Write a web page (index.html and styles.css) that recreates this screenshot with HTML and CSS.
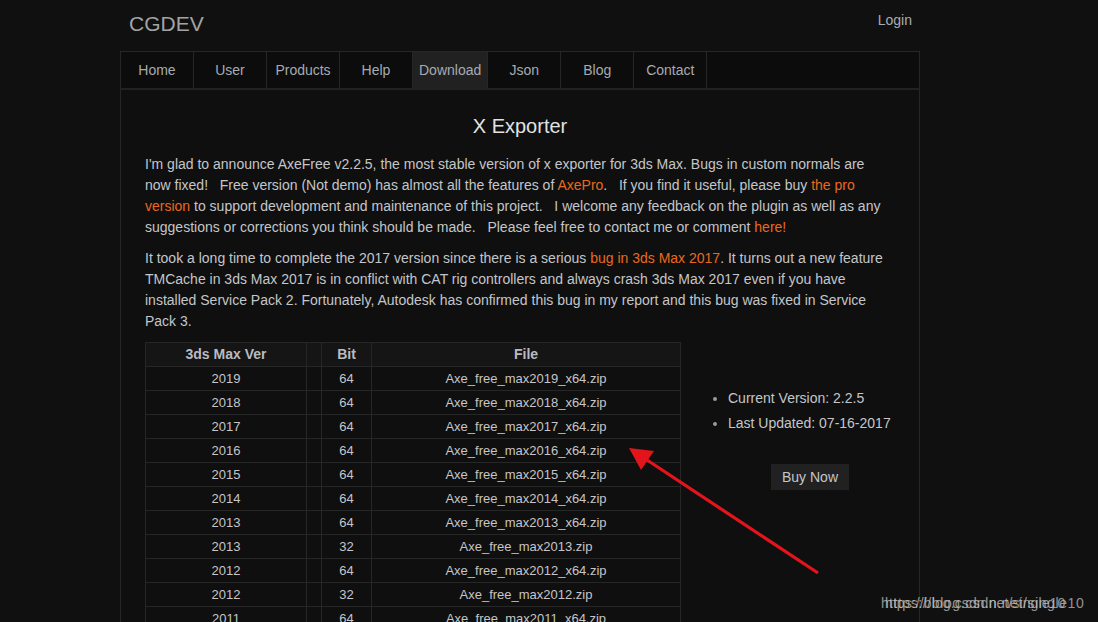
FILE: index.html
```html
<!DOCTYPE html>
<html>
<head>
<meta charset="utf-8">
<title>CGDEV - X Exporter</title>
<link rel="stylesheet" href="styles.css">
</head>
<body>
<div class="page">
  <header class="top">
    <span class="brand">CGDEV</span>
    <a class="login" href="#">Login</a>
  </header>
  <nav class="nav">
    <a class="nav-item" href="#">Home</a>
    <a class="nav-item" href="#">User</a>
    <a class="nav-item" href="#">Products</a>
    <a class="nav-item" href="#">Help</a>
    <a class="nav-item active" href="#">Download</a>
    <a class="nav-item" href="#">Json</a>
    <a class="nav-item" href="#">Blog</a>
    <a class="nav-item" href="#">Contact</a>
  </nav>
  <main class="panel">
    <h1 class="title">X Exporter</h1>
    <p class="text">I'm glad to announce AxeFree v2.2.5, the most stable version of x exporter for 3ds Max. Bugs in custom normals are now fixed! &nbsp; Free version (Not demo) has almost all the features of <a class="link" href="#">AxePro</a>. &nbsp; If you find it useful, please buy <a class="link" href="#">the pro version</a> to support development and maintenance of this project. &nbsp; I welcome any feedback on the plugin as well as any suggestions or corrections you think should be made. &nbsp; Please feel free to contact me or comment <a class="link" href="#">here!</a></p>
    <p class="text">It took a long time to complete the 2017 version since there is a serious <a class="link" href="#">bug in 3ds Max 2017</a>. It turns out a new feature TMCache in 3ds Max 2017 is in conflict with CAT rig controllers and always crash 3ds Max 2017 even if you have installed Service Pack 2. Fortunately, Autodesk has confirmed this bug in my report and this bug was fixed in Service Pack 3.</p>
    <div class="downloads">
      <table class="files">
        <thead>
          <tr><th class="c-ver">3ds Max Ver</th><th class="c-gap"></th><th class="c-bit">Bit</th><th class="c-file">File</th></tr>
        </thead>
        <tbody>
          <tr><td>2019</td><td></td><td>64</td><td>Axe_free_max2019_x64.zip</td></tr>
          <tr><td>2018</td><td></td><td>64</td><td>Axe_free_max2018_x64.zip</td></tr>
          <tr><td>2017</td><td></td><td>64</td><td>Axe_free_max2017_x64.zip</td></tr>
          <tr><td>2016</td><td></td><td>64</td><td>Axe_free_max2016_x64.zip</td></tr>
          <tr><td>2015</td><td></td><td>64</td><td>Axe_free_max2015_x64.zip</td></tr>
          <tr><td>2014</td><td></td><td>64</td><td>Axe_free_max2014_x64.zip</td></tr>
          <tr><td>2013</td><td></td><td>64</td><td>Axe_free_max2013_x64.zip</td></tr>
          <tr><td>2013</td><td></td><td>32</td><td>Axe_free_max2013.zip</td></tr>
          <tr><td>2012</td><td></td><td>64</td><td>Axe_free_max2012_x64.zip</td></tr>
          <tr><td>2012</td><td></td><td>32</td><td>Axe_free_max2012.zip</td></tr>
          <tr><td>2011</td><td></td><td>64</td><td>Axe_free_max2011_x64.zip</td></tr>
        </tbody>
      </table>
      <aside class="side">
        <ul class="info">
          <li>Current Version: 2.2.5</li>
          <li>Last Updated: 07-16-2017</li>
        </ul>
        <a class="buy" href="#">Buy Now</a>
      </aside>
    </div>
  </main>
</div>
<svg class="arrow" width="1098" height="622" viewBox="0 0 1098 622">
  <line x1="818" y1="573" x2="644" y2="458" stroke="#e3141c" stroke-width="3.2"/>
  <polygon points="629,448 654,451 641,470" fill="#e3141c"/>
</svg>
<div class="watermark"><span class="wm-a">https://blog.csdn.net/single10</span><span class="wm-b">https://blog.csdn.net/single10</span></div>
</body>
</html>
```
FILE: styles.css
```css
html, body {
  margin: 0;
  padding: 0;
  background: #101010;
  overflow: hidden;
  height: 622px;
}
body {
  font-family: "Liberation Sans", Arial, sans-serif;
  font-size: 14px;
  color: #c4c6c9;
}
a { text-decoration: none; }

.page {
  width: 800px;
  margin-left: 120px;
}

.top {
  height: 51px;
  display: flex;
  justify-content: space-between;
  align-items: flex-start;
}
.brand {
  font-size: 21px;
  color: #a3a3a3;
  margin: 12px 0 0 9px;
  line-height: 24px;
}
.login {
  color: #a9adb2;
  font-size: 14px;
  line-height: 16px;
  margin: 12px 8px 0 0;
}

.nav {
  display: flex;
  height: 36px;
  border: 1px solid #262626;
  border-bottom: 2px solid #222;
  background: #0c0c0c;
}
.nav-item {
  min-width: 73px;
  padding: 0 6px;
  box-sizing: border-box;
  border-right: 1px solid #262626;
  display: flex;
  align-items: center;
  justify-content: center;
  color: #a6abb1;
  font-size: 14px;
}
.nav-item.active { background: #212121; }

.panel {
  border-left: 1px solid #262626;
  border-right: 1px solid #262626;
  padding: 25px 33px 0 24px;
  height: 600px;
  background: #0f0f0f;
}
.title {
  margin: 0 0 17px 0;
  text-align: center;
  font-size: 20px;
  line-height: 22px;
  font-weight: normal;
  color: #e2e2e2;
  padding-left: 9px;
}
.text {
  margin: 0 0 10px 0;
  line-height: 21px;
}
.link { color: #e8691f; }

.downloads {
  display: flex;
  align-items: flex-start;
  margin-top: 10px;
}
.files {
  border-collapse: collapse;
  width: 536px;
  flex: none;
}
.files th, .files td {
  border: 1px solid #262626;
  text-align: center;
  padding: 3px 4px;
  line-height: 17px;
  height: 17px;
}
.files th {
  background: #151515;
  font-weight: bold;
  font-size: 14px;
  color: #b9bcc0;
}
.files td {
  color: #c4c6c9;
  font-size: 13px;
}
.c-ver { width: 152px; }
.c-gap { width: 6px; }
.c-bit { width: 41px; }

.side {
  flex: 1;
  padding-top: 44px;
}
.info {
  margin: 0;
  padding-left: 47px;
  line-height: 25px;
  white-space: nowrap;
}
.info li::marker { color: #9a9a9a; }
.buy {
  display: inline-block;
  margin: 28px 0 0 90px;
  padding: 5px 11px;
  line-height: 16px;
  background: #212121;
  color: #c4c6c9;
}

.arrow {
  position: absolute;
  left: 0;
  top: 0;
  pointer-events: none;
}
.watermark {
  position: absolute;
  left: 881px;
  top: 594px;
  width: 210px;
  height: 18px;
  color: #c9c9c9;
  font-size: 14px;
  line-height: 18px;
}
.wm-a, .wm-b {
  position: absolute;
  top: 0;
  white-space: nowrap;
  opacity: 0.7;
}
.wm-a { left: 0; letter-spacing: 0.1px; }
.wm-b { left: 4px; letter-spacing: 0.6px; }
```
